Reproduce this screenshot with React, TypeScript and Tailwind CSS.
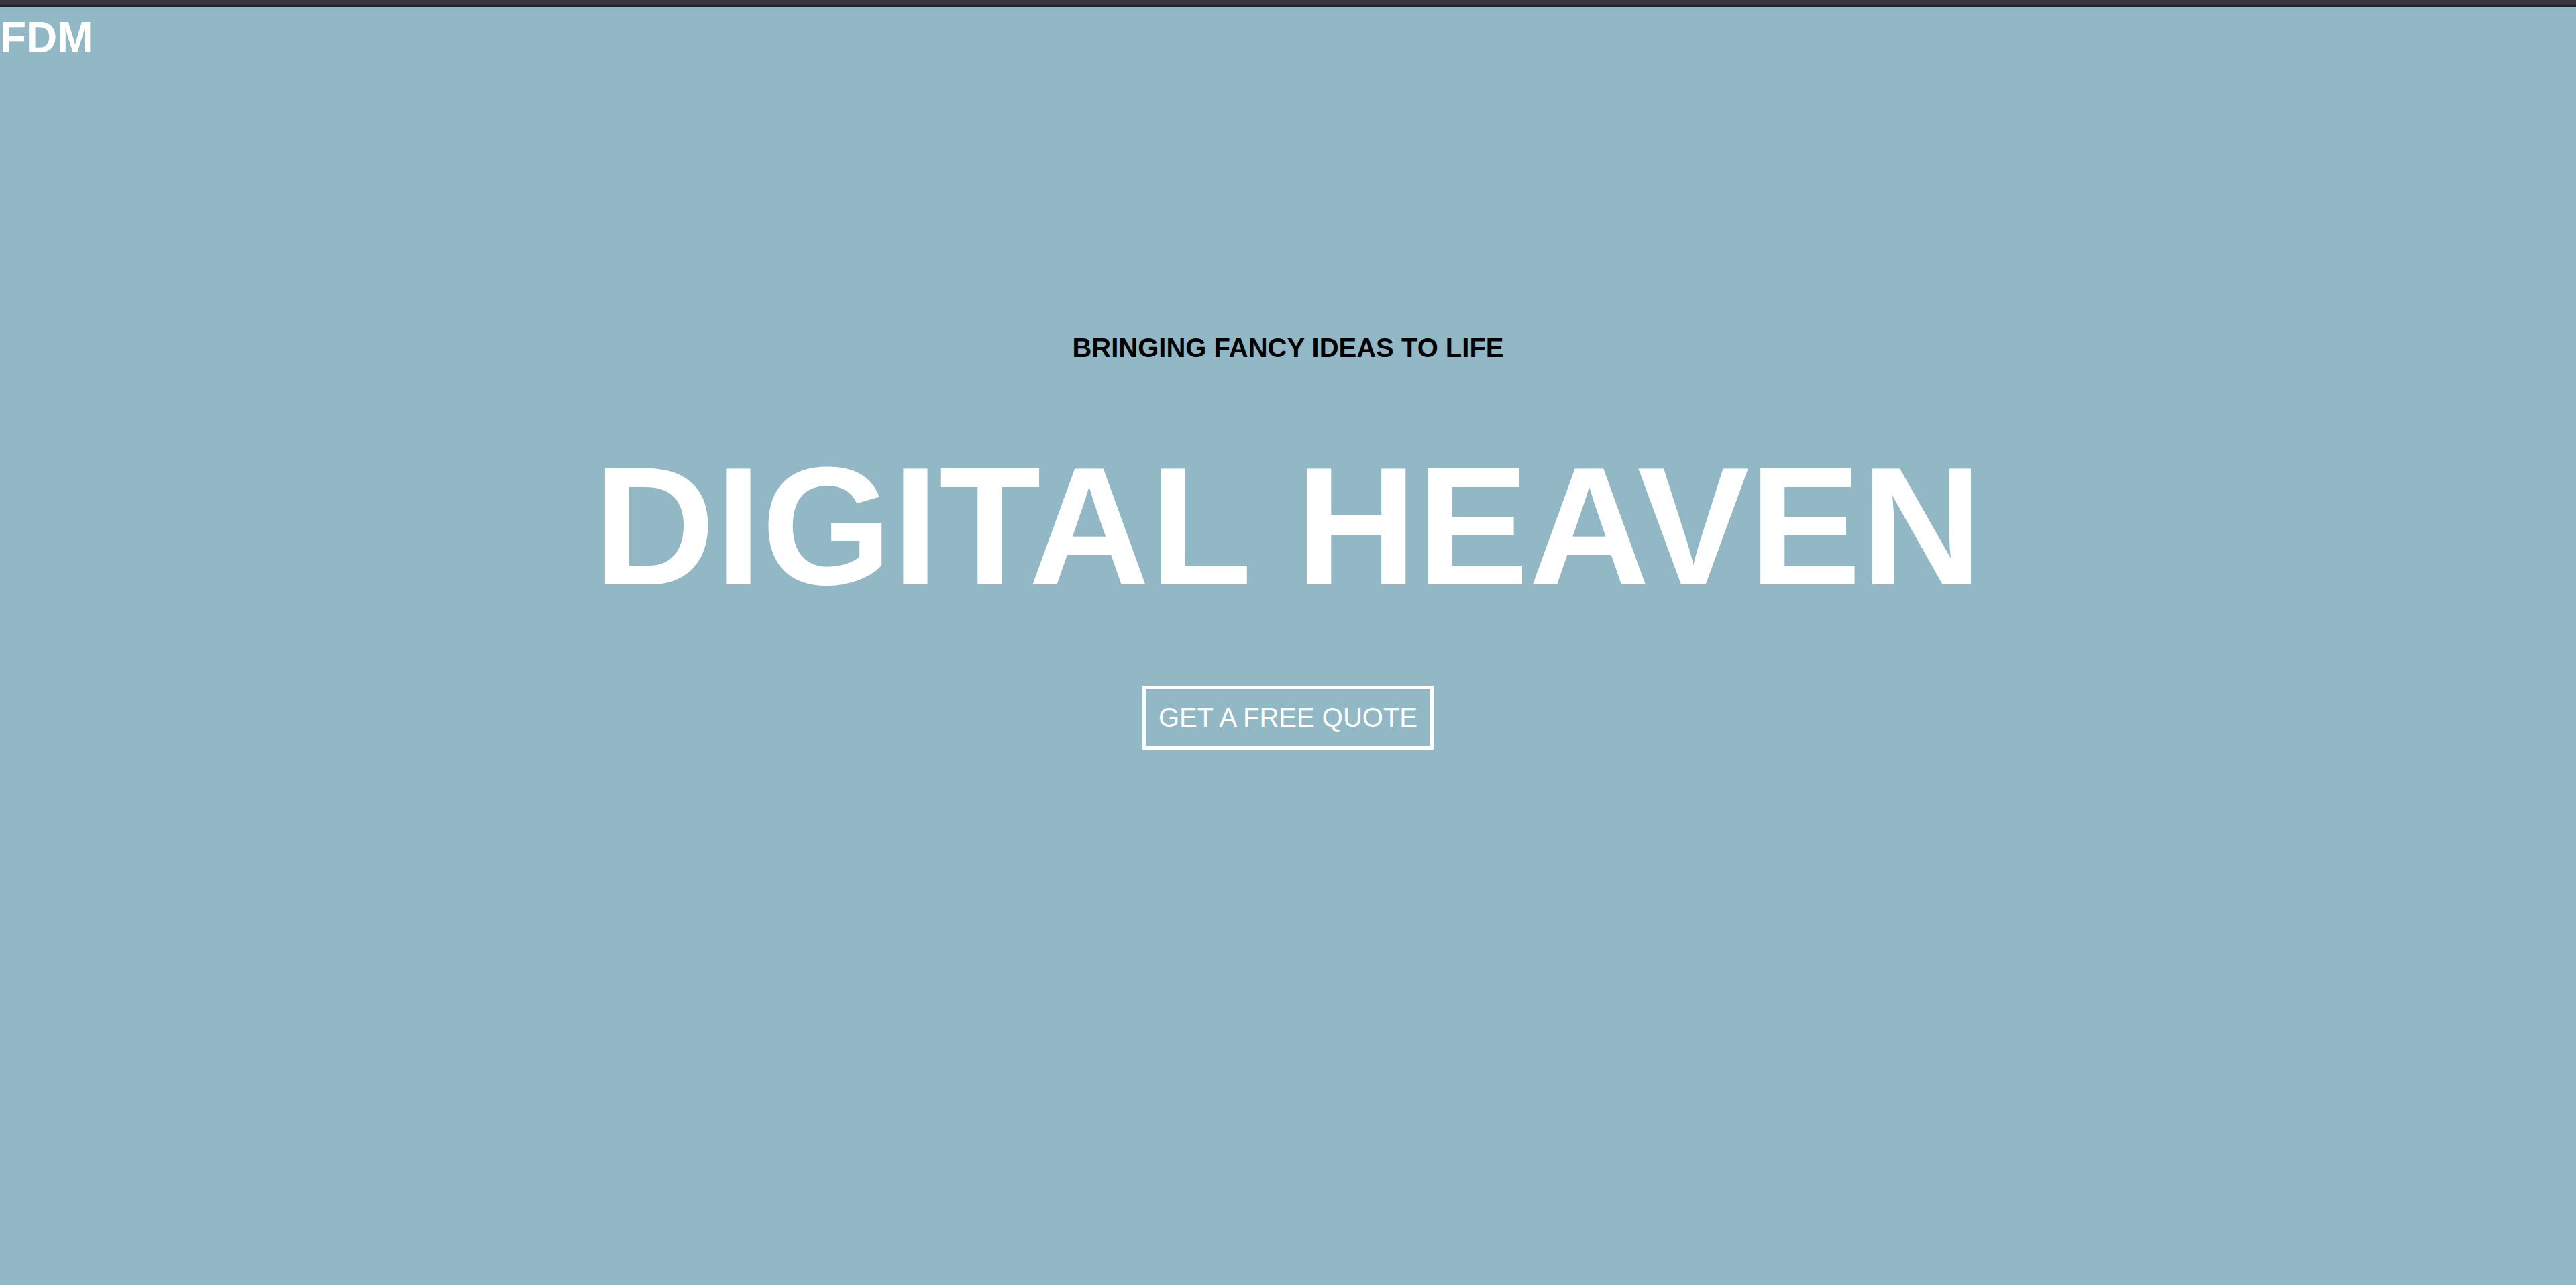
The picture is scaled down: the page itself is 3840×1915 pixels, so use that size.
import React from 'react';

const App: React.FC = () => {
  return (
    <div className="min-h-screen bg-[#92b8c6] font-['Liberation_Sans',Arial,sans-serif]">
      <div className="h-[7px] bg-[#36373c]" />
      <div className="h-[3px] bg-[#222326]" />
      <header className="pt-[14px]">
        <div className="text-[64px] font-bold leading-none text-white">FDM</div>
      </header>
      <main className="flex flex-col items-center pt-[410px]">
        <p className="text-[40px] font-bold leading-none text-black">BRINGING FANCY IDEAS TO LIFE</p>
        <h1 className="mt-[122px] text-[250px] font-bold leading-none text-white">DIGITAL HEAVEN</h1>
        <button className="mt-[112px] border-[5px] border-white px-[19px] py-[20px] text-[40px] leading-[45px] text-white">
          GET A FREE QUOTE
        </button>
      </main>
    </div>
  );
};

export default App;
